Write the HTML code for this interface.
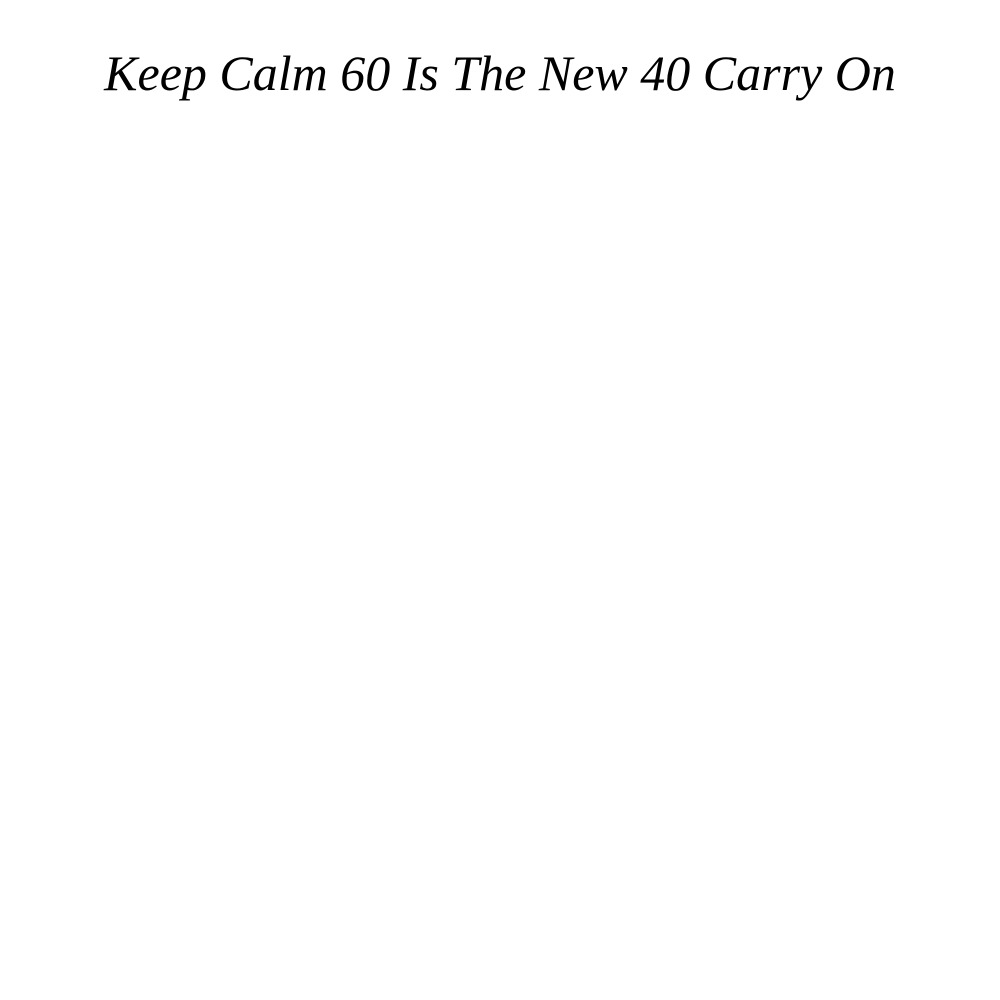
<!DOCTYPE html>
<html><head><meta charset="utf-8"><style>
html,body{margin:0;padding:0;background:#fff;width:1000px;height:1000px;overflow:hidden}
h1{position:absolute;left:0;top:38px;width:1000px;margin:0;text-align:center;font-family:"Liberation Serif",serif;font-style:italic;font-weight:normal;font-size:50px;line-height:70px;color:#000;letter-spacing:0px}
</style></head><body>
<h1>Keep Calm 60 Is The New 40 Carry On</h1>
</body></html>
